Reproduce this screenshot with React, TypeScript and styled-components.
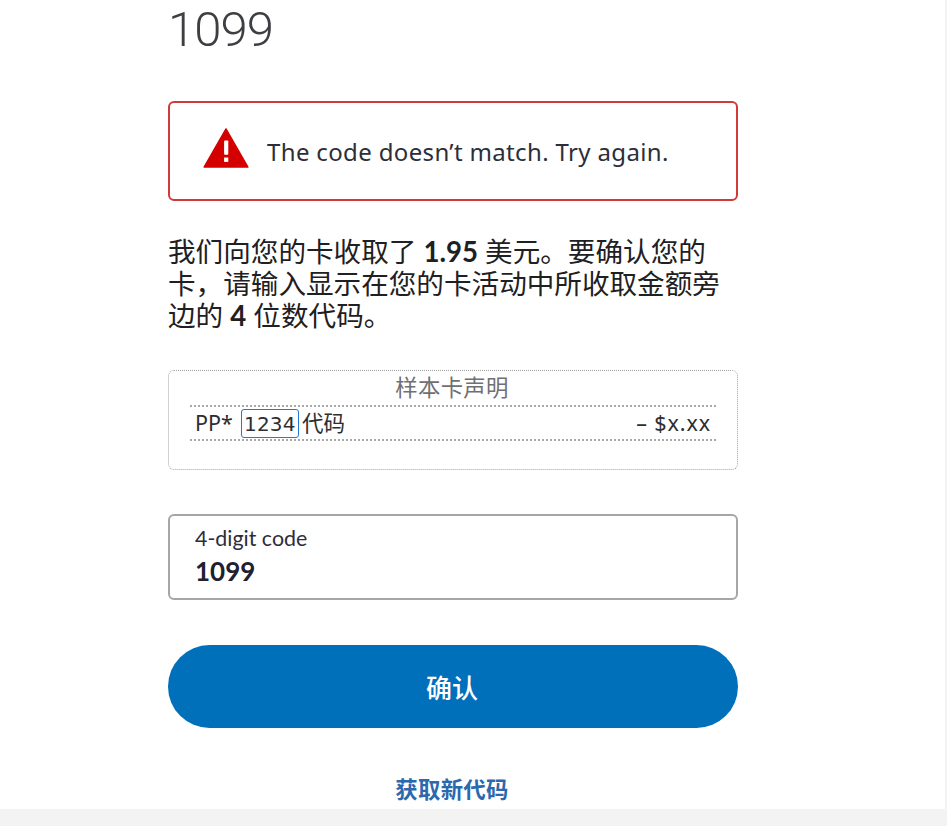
import React from "react";
import styled, { createGlobalStyle } from "styled-components";

const CJK = '"Noto Sans CJK SC", sans-serif';

const Global = createGlobalStyle`
  html, body { margin: 0; padding: 0; background: #f3f3f3; }
  body { width: 947px; height: 826px; overflow: hidden; }
`;

const Sheet = styled.main`
  width: 945px;
  height: 809px;
  background: #fff;
  overflow: hidden;
  box-sizing: border-box;
  padding: 0 0 0 168px;
`;

const Column = styled.div`
  width: 570px;
  display: flex;
  flex-direction: column;
`;

const Amount = styled.h1`
  margin: 0;
  height: 101px;
  box-sizing: border-box;
  padding-top: 1px;
  font: 300 49px/58px Roboto, sans-serif;
  letter-spacing: -0.9px;
  color: #3d3f42;
`;

const Alert = styled.div`
  height: 100px;
  box-sizing: border-box;
  border: 2px solid #d03a3a;
  border-radius: 6px;
  display: flex;
  align-items: center;
  padding-left: 33px;
  gap: 17px;
`;

const AlertIcon = styled.svg`
  width: 46px;
  height: 40px;
  margin-top: -6px;
  flex: none;
`;

const AlertText = styled.span`
  font: 400 24px/30px "Noto Sans", ${CJK};
  letter-spacing: 0.35px;
  margin: 2px 0 0 1px;
  color: #2c2e3a;
`;

const Intro = styled.p`
  margin: 35px 0 0;
  font: 400 27.6px/32px Lato, ${CJK};
  color: #1f2022;
`;

const Figure = styled.strong`
  font-weight: 700;
`;

const Sample = styled.section`
  margin-top: 38px;
  height: 100px;
  box-sizing: border-box;
  border: 1px dotted #a2a2a2;
  border-radius: 6px;
  padding: 0 21px;
`;

const SampleTitle = styled.div`
  height: 34px;
  text-align: center;
  font: 400 22.4px/30px ${CJK};
  letter-spacing: 0.3px;
  padding-right: 2px;
  color: #6f7072;
`;

const SampleRow = styled.div`
  height: 36px;
  border-top: 2px dotted #a8a8a8;
  border-bottom: 2px dotted #a8a8a8;
  box-sizing: border-box;
  display: flex;
  align-items: center;
  justify-content: space-between;
  padding: 0 5px;
  font: 400 21.5px/30px "Noto Sans", ${CJK};
  color: #2c2e2f;
`;

const Descriptor = styled.span`
  display: flex;
  align-items: center;
`;

const Highlight = styled.span`
  border: 1px solid #2478d8;
  border-radius: 3px;
  height: 29px;
  width: 58px;
  box-sizing: border-box;
  margin: 0 3px 0 8px;
  text-align: center;
  font: 400 20px/28px "DejaVu Sans", sans-serif;
  letter-spacing: 0.2px;
`;

const Charge = styled.span`
  letter-spacing: 0.9px;
`;

const Field = styled.label`
  margin-top: 44px;
  height: 86px;
  box-sizing: border-box;
  border: 2px solid #a6a6a6;
  border-radius: 6px;
  padding: 8px 0 0 25px;
  display: flex;
  flex-direction: column;
`;

const FieldLabel = styled.span`
  font: 400 21.4px/28px Lato, sans-serif;
  color: #2c2e3a;
`;

const FieldValue = styled.span`
  font: 700 26px/38px Lato, sans-serif;
  color: #1f2030;
`;

const Confirm = styled.button`
  margin-top: 45px;
  height: 83px;
  border: 0;
  border-radius: 42px;
  background: #0070ba;
  color: #fff;
  font: 500 26px/1 ${CJK};
  padding: 0 2px 0 0;
`;

const NewCode = styled.a`
  margin-top: 42px;
  text-align: center;
  font: 700 22.4px/36px ${CJK};
  letter-spacing: 0.3px;
  padding-right: 2px;
  color: #2b68ae;
`;

const WarnIcon = () => (
  <AlertIcon viewBox="0 0 48 42" aria-hidden="true">
    <path d="M24 1 L47 41 H1 Z" fill="#d40000" stroke="#d40000" strokeWidth="1.5" strokeLinejoin="round" />
    <rect x="22" y="13" width="4.4" height="15" rx="1" fill="#fff" />
    <rect x="22" y="31" width="4.4" height="4.6" fill="#fff" />
  </AlertIcon>
);

export default function App() {
  return (
    <Sheet>
      <Global />
      <Column>
        <Amount>1099</Amount>
        <Alert>
          <WarnIcon />
          <AlertText>The code doesn’t match. Try again.</AlertText>
        </Alert>
        <Intro>
          我们向您的卡收取了 <Figure>1.95</Figure> 美元。要确认您的卡，请输入显示在您的卡活动中所收取金额旁边的 <Figure>4</Figure> 位数代码。
        </Intro>
        <Sample>
          <SampleTitle>样本卡声明</SampleTitle>
          <SampleRow>
            <Descriptor>
              PP*
              <Highlight>1234</Highlight>
              代码
            </Descriptor>
            <Charge>– $x.xx</Charge>
          </SampleRow>
        </Sample>
        <Field>
          <FieldLabel>4-digit code</FieldLabel>
          <FieldValue>1099</FieldValue>
        </Field>
        <Confirm>确认</Confirm>
        <NewCode>获取新代码</NewCode>
      </Column>
    </Sheet>
  );
}
